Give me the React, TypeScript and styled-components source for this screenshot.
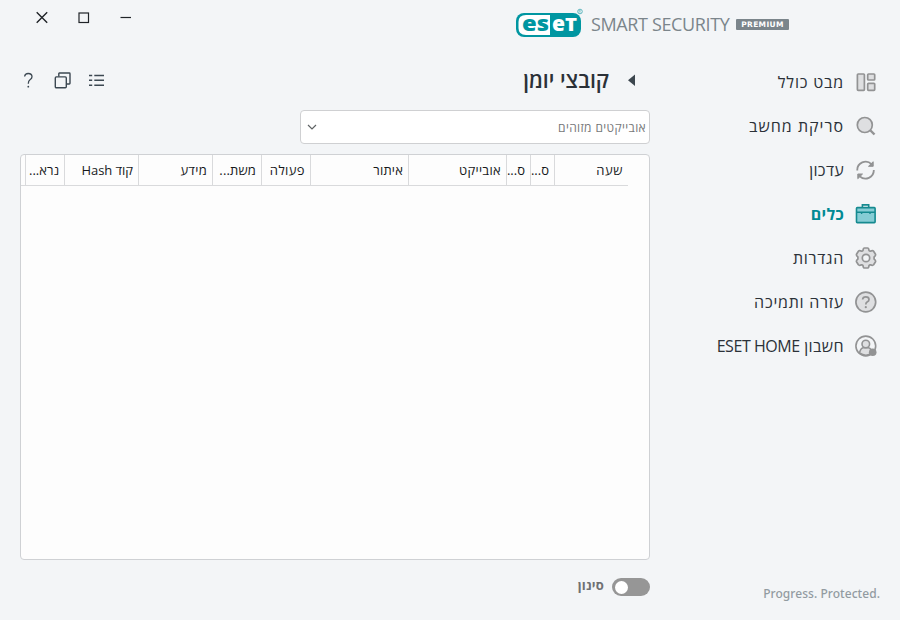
import React from "react";
import styled, { createGlobalStyle } from "styled-components";

const Global = createGlobalStyle`
  * { box-sizing: border-box; }
  body { margin: 0; background: #f3f5f7; }
`;

const Window = styled.div`
  direction: rtl;
  width: 900px;
  height: 620px;
  display: flex;
  flex-direction: column;
  background: #f3f5f7;
  color: #2b3138;
  font-family: "Open Sans", "Noto Sans", sans-serif;
  overflow: hidden;
`;

const TitleBar = styled.header`
  height: 50px;
  display: flex;
  justify-content: space-between;
  padding: 0 111px 0 34px;
`;

const Brand = styled.div`
  direction: ltr;
  display: flex;
  align-items: flex-start;
`;

const Product = styled.span<{ $spacing: number }>`
  margin: 11px 0 0 7px;
  font-size: 18px;
  line-height: 26px;
  letter-spacing: ${(p) => p.$spacing}px;
  color: #7b858b;
  white-space: nowrap;
  width: 139px;
`;

const Edition = styled.span`
  margin: 19px 0 0 6px;
  width: 53px;
  height: 11px;
  border-radius: 1px;
  background: #7b858b;
  color: #fff;
  font-family: "DejaVu Sans", sans-serif;
  font-size: 7.5px;
  font-weight: 700;
  line-height: 11px;
  letter-spacing: 0.35px;
  text-align: center;
  white-space: nowrap;
`;

const WindowControls = styled.div`
  direction: ltr;
  display: flex;
  gap: 26px;
  padding-top: 9px;
`;

const Body = styled.div`
  flex: 1;
  display: grid;
  grid-template-columns: 230px 630px;
  column-gap: 20px;
  min-height: 0;
`;

const Sidebar = styled.aside`
  display: flex;
  flex-direction: column;
  justify-content: space-between;
  padding: 10px 20px 0 0;
`;

const Nav = styled.nav`
  display: flex;
  flex-direction: column;
`;

const NavItem = styled.a<{ $active?: boolean }>`
  height: 44px;
  display: flex;
  align-items: center;
  gap: 10px;
  padding-right: 2px;
  color: ${(p) => (p.$active ? "#008a94" : "#2b3138")};
  font-weight: ${(p) => (p.$active ? 700 : 400)};
`;

const NavLabel = styled.span<{ $spacing: number }>`
  font-size: 16px;
  line-height: 22px;
  letter-spacing: ${(p) => p.$spacing}px;
  white-space: nowrap;
`;

const Latin = styled.bdi`
  letter-spacing: -0.45px;
`;

const Tagline = styled.div`
  direction: ltr;
  height: 37px;
  padding-top: 1px;
  text-align: right;
  font-family: "Noto Sans", sans-serif;
  font-size: 12px;
  font-weight: 500;
  line-height: 20px;
  letter-spacing: 0.05px;
  color: #929ba1;
`;

const Main = styled.main`
  display: flex;
  flex-direction: column;
`;

const PageHeader = styled.div`
  height: 60px;
  display: flex;
  justify-content: space-between;
  padding: 0 13px 0 0;
`;

const Heading = styled.div`
  display: flex;
  gap: 18px;
`;

const Title = styled.h1`
  margin: 15px 0 0;
  font-size: 21.3px;
  font-weight: 600;
  line-height: 30px;
  white-space: nowrap;
`;

const Tools = styled.div`
  direction: ltr;
  display: flex;
  gap: 17px;
  padding: 22px 0 0 0;
`;

const Select = styled.div`
  width: 350px;
  height: 34px;
  display: flex;
  align-items: center;
  justify-content: space-between;
  padding: 0 3px 0 6px;
  border: 1px solid #cfd0d2;
  border-radius: 4px;
  background: #fff;
  font-size: 12px;
  letter-spacing: 0.38px;
  color: #77787a;
`;

const Table = styled.section`
  margin-top: 10px;
  height: 406px;
  border: 1px solid #cfd1d4;
  border-radius: 4px;
  background: #fdfdfd;
  padding-right: 21px;
  overflow: hidden;
`;

const HeadRow = styled.div`
  height: 31px;
  display: flex;
  border-bottom: 1px solid #d9dadc;
`;

const HeadCell = styled.div<{ $width: number; $spacing?: number }>`
  width: ${(p) => p.$width}px;
  flex: none;
  padding-right: 5px;
  border-left: 1px solid #d9dadc;
  font-size: 13px;
  line-height: 31px;
  letter-spacing: ${(p) => p.$spacing ?? 0}px;
  color: #17191b;
  white-space: nowrap;
`;

const FilterRow = styled.label`
  display: flex;
  align-items: center;
  gap: 8px;
  height: 18px;
  margin-top: 18px;
  font-size: 13px;
  font-weight: 700;
  letter-spacing: 0.2px;
  color: #6f7173;
`;

const FilterLabel = styled.span`
  line-height: 18px;
  padding-bottom: 4px;
`;

const Switch = styled.span`
  width: 38px;
  height: 18px;
  border-radius: 9px;
  background: #969696;
  display: flex;
  align-items: center;
  justify-content: flex-end;
  padding-left: 3px;
`;

const Knob = styled.span`
  width: 13px;
  height: 13px;
  border-radius: 50%;
  background: #fff;
`;

const BrandLetters = styled.text`
  font-family: "Open Sans", sans-serif;
  font-weight: 800;
`;

const EsetLogo = () => (
  <svg width="68" height="40" viewBox="0 0 68 40">
    <rect x="0" y="13" width="65" height="24" rx="8" fill="#0096a1" />
    <path d="M34 15H10Q2.500 15 2.500 22V28Q2.500 35 10 35H34Z" fill="#fff" />
    <BrandLetters x="6" y="31" fontSize="21" textLength="27" lengthAdjust="spacingAndGlyphs" fill="#0096a1">es</BrandLetters>
    <BrandLetters x="36" y="31" fontSize="21" textLength="13" lengthAdjust="spacingAndGlyphs" fill="#fff">e</BrandLetters>
    <BrandLetters x="49" y="31" fontSize="17.500" textLength="12" lengthAdjust="spacingAndGlyphs" fill="#fff">T</BrandLetters>
    <circle cx="64" cy="11.500" r="2.300" fill="none" stroke="#3faab2" strokeWidth=".8" />
    <path d="M63.200 12.700V10.400H64.300Q65 11 64.200 11.600L65 12.700" fill="none" stroke="#3faab2" strokeWidth=".5" />
  </svg>
);

const outline = { fill: "#dedfe1", stroke: "#929394", strokeWidth: 1.7 };

const icons: Record<string, React.ReactNode> = {
  overview: (
    <g {...outline}>
      <rect x="2.400" y="3" width="7" height="16.300" rx=".8" />
      <rect x="12.700" y="3" width="7" height="6" rx=".8" />
      <rect x="12.700" y="12.300" width="7" height="7" rx=".8" />
    </g>
  ),
  scan: (
    <g {...outline}>
      <path d="M15.500 15.500L19.500 19.500" strokeWidth="2.400" />
      <circle cx="9.800" cy="10" r="7.500" />
    </g>
  ),
  update: (
    <g fill="none" stroke="#929394" strokeWidth="1.800">
      <path d="M2.300 11.500A8.300 8.300 0 0 1 16.500 5.200M18.800 11A8.300 8.300 0 0 1 4.800 17.300" />
      <path d="M18.200 2.700V7.300H13.500ZM2.800 19.700V15H7.500Z" fill="#929394" strokeWidth="1" />
    </g>
  ),
  tools: (
    <g fill="#86cdd5" stroke="#158a90" strokeWidth="1.600">
      <path d="M7.400 4.500V1.900H13.700V4.500" fill="none" />
      <rect x="1.500" y="4.600" width="18.600" height="15" rx=".8" />
      <path d="M2 9.200H20M6.600 9.500V11M15 9.500V11" strokeWidth="1.400" />
    </g>
  ),
  settings: (
    <g {...outline}>
      <path
        strokeLinejoin="round"
        d="M8 3.400Q8.300 1 9.400 1H12.600Q13.700 1 14 3.400Q14.500 4.100 15.300 4.200Q17.800 3.200 18.600 4.200L20.500 7.300Q21 8.500 19.100 9.900V12.100Q21 13.500 20.500 14.700L18.600 17.800Q17.800 18.800 15.300 17.800Q14.500 17.900 14 18.600Q13.700 21 12.600 21H9.400Q8.300 21 8 18.600Q7.500 17.900 6.700 17.800Q4.200 18.800 3.400 17.800L1.500 14.700Q1 13.500 2.900 12.100V9.900Q1 8.500 1.500 7.300L3.400 4.200Q4.200 3.200 6.700 4.200Q7.500 4.100 8 3.400Z"
      />
      <circle cx="11" cy="11" r="3.700" fill="#f3f5f7" />
    </g>
  ),
  help: (
    <g {...outline}>
      <circle cx="10.800" cy="11" r="9.900" />
      <path d="M7.600 8.500Q7.800 5.800 10.800 5.800Q14 5.800 14 8.400Q14 10 12.100 11Q10.800 11.800 10.800 13.400" fill="none" />
      <circle cx="10.800" cy="16.200" r="1.100" fill="#929394" stroke="none" />
    </g>
  ),
  account: (
    <g {...outline} strokeWidth="1.600">
      <circle cx="10.800" cy="11" r="9.900" fill="#f3f5f7" />
      <path d="M4.500 18Q5.300 13.500 8 12.700H13.500Q16.500 13.500 17.200 18Q11 22.500 4.500 18Z" />
      <circle cx="10.800" cy="9" r="3.800" />
      <circle cx="17.700" cy="17.200" r="3.800" fill="#929394" stroke="none" />
    </g>
  ),
};

const navItems: {
  icon: string;
  label: string;
  latin?: string;
  spacing: number;
  active?: boolean;
}[] = [
  { icon: "overview", label: "מבט כולל", spacing: 0.8 },
  { icon: "scan", label: "סריקת מחשב", spacing: 1 },
  { icon: "update", label: "עדכון", spacing: 0.3 },
  { icon: "tools", label: "כלים", spacing: 0.3, active: true },
  { icon: "settings", label: "הגדרות", spacing: 0.7 },
  { icon: "help", label: "עזרה ותמיכה", spacing: 0.75 },
  { icon: "account", label: "חשבון ", latin: "ESET HOME", spacing: 0.4 },
];

const columns = [
  { label: "שעה", width: 74, spacing: 0.6 },
  { label: "ס...", width: 24 },
  { label: "ס...", width: 24 },
  { label: "אובייקט", width: 98, spacing: 0.3 },
  { label: "איתור", width: 98, spacing: 0.2 },
  { label: "פעולה", width: 49, spacing: 0.4 },
  { label: "משת...", width: 49, spacing: 0.15 },
  { label: "מידע", width: 74, spacing: 0.3 },
  { label: "קוד Hash", width: 74, spacing: -0.05 },
  { label: "נרא...", width: 39 },
];

export default function App() {
  return (
    <>
      <Global />
      <Window>
        <TitleBar>
          <Brand>
            <EsetLogo />
            <Product $spacing={-0.37}>SMART SECURITY</Product>
            <Edition>PREMIUM</Edition>
          </Brand>
          <WindowControls>
            <svg width="16" height="16" stroke="#202428" strokeWidth="1.400">
              <path d="M2.700 3.300L13.200 13.800M13.200 3.300L2.700 13.800" />
            </svg>
            <svg width="16" height="16" fill="none" stroke="#202428" strokeWidth="1.200">
              <rect x="3" y="4" width="9.500" height="9.500" />
            </svg>
            <svg width="16" height="16" stroke="#202428" strokeWidth="1.200">
              <path d="M2.500 8.500H13" />
            </svg>
          </WindowControls>
        </TitleBar>
        <Body>
          <Sidebar>
            <Nav>
              {navItems.map((n) => (
                <NavItem key={n.icon} $active={n.active}>
                  <svg width="24" height="22" viewBox="-1 0 24 22">{icons[n.icon]}</svg>
                  <NavLabel $spacing={n.spacing}>
                    {n.label}
                    {n.latin && <Latin>{n.latin}</Latin>}
                  </NavLabel>
                </NavItem>
              ))}
            </Nav>
            <Tagline>Progress. Protected.</Tagline>
          </Sidebar>
          <Main>
            <PageHeader>
              <Heading>
                <svg width="10" height="60">
                  <path d="M8 24.500V36L1 30.200Z" fill="#3c464e" />
                </svg>
                <Title>קובצי יומן</Title>
              </Heading>
              <Tools>
                <svg width="16" height="18" fill="none" stroke="#3c4852" strokeWidth="1.300">
                  <path d="M4.600 4.500Q5 1.500 8.200 1.500Q12 1.500 12 4.800Q12 6.500 10 7.800Q8.300 9 8.300 11.800" />
                  <circle cx="8.300" cy="14.700" r=".9" fill="#3c4852" stroke="none" />
                </svg>
                <svg width="18" height="18" fill="none" stroke="#3c4852" strokeWidth="1.400">
                  <rect x="2.300" y="4.900" width="11" height="10.800" rx="1" />
                  <path d="M5.800 4.500V1.500Q5.800 1 6.300 1H16.300Q17 1 17 1.700V11.300Q17 12 16.300 12H13.600" />
                </svg>
                <svg width="18" height="18" stroke="#3c4852" strokeWidth="1.500">
                  <path d="M1 3.500H4.200M6.300 3.500H16M1 8.300H4.200M6.300 8.300H16M1 13.200H4.200M6.300 13.200H16" />
                </svg>
              </Tools>
            </PageHeader>
            <Select>
              <span>אובייקטים מזוהים</span>
              <svg width="10" height="10" fill="none" stroke="#5f6365" strokeWidth="1.200">
                <path d="M1 3L5 7L9 3" />
              </svg>
            </Select>
            <Table>
              <HeadRow>
                {columns.map((c, i) => (
                  <HeadCell key={i} $width={c.width} $spacing={c.spacing}>{c.label}</HeadCell>
                ))}
              </HeadRow>
            </Table>
            <FilterRow>
              <Switch>
                <Knob />
              </Switch>
              <FilterLabel>סינון</FilterLabel>
            </FilterRow>
          </Main>
        </Body>
      </Window>
    </>
  );
}
